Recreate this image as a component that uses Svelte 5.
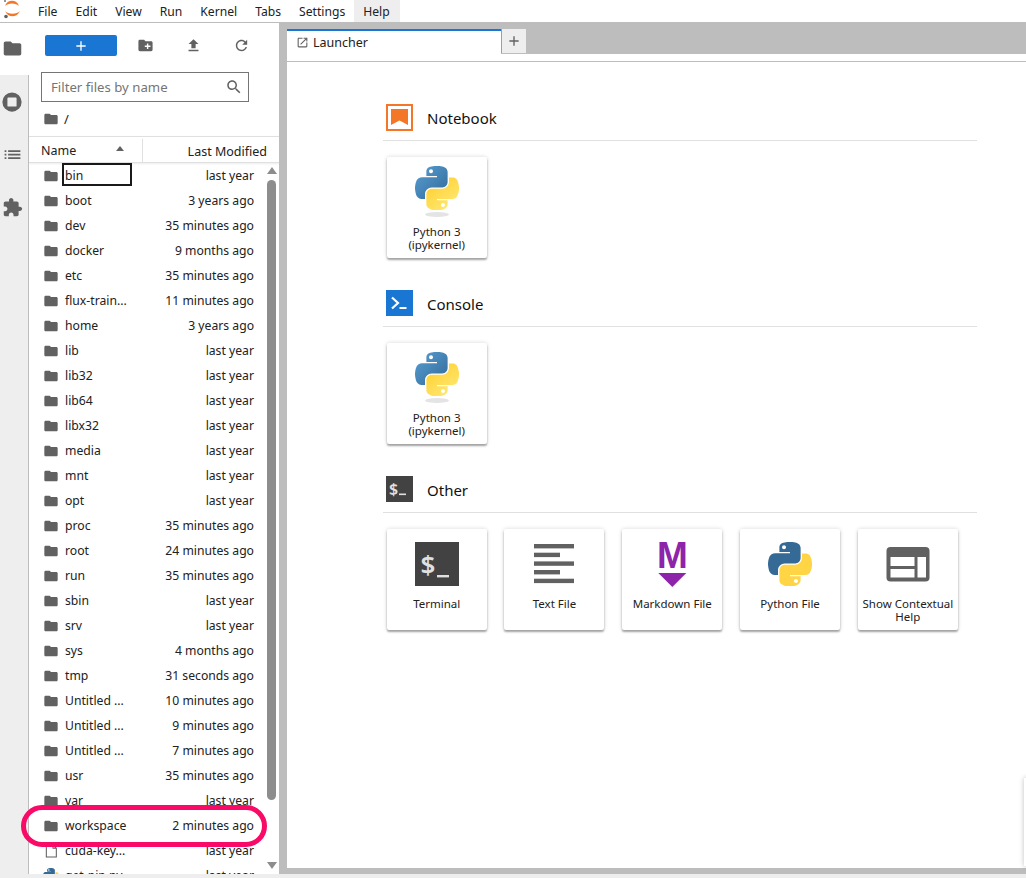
<script>
  const menus = ['File', 'Edit', 'View', 'Run', 'Kernel', 'Tabs', 'Settings', 'Help'];

  const files = [
    ['bin', 'last year'],
    ['boot', '3 years ago'],
    ['dev', '35 minutes ago'],
    ['docker', '9 months ago'],
    ['etc', '35 minutes ago'],
    ['flux-train...', '11 minutes ago'],
    ['home', '3 years ago'],
    ['lib', 'last year'],
    ['lib32', 'last year'],
    ['lib64', 'last year'],
    ['libx32', 'last year'],
    ['media', 'last year'],
    ['mnt', 'last year'],
    ['opt', 'last year'],
    ['proc', '35 minutes ago'],
    ['root', '24 minutes ago'],
    ['run', '35 minutes ago'],
    ['sbin', 'last year'],
    ['srv', 'last year'],
    ['sys', '4 months ago'],
    ['tmp', '31 seconds ago'],
    ['Untitled ...', '10 minutes ago'],
    ['Untitled ...', '9 minutes ago'],
    ['Untitled ...', '7 minutes ago'],
    ['usr', '35 minutes ago'],
    ['var', 'last year'],
    ['workspace', '2 minutes ago'],
    ['cuda-key...', 'last year', 'file'],
    ['get-pip.py', 'last year', 'py']
  ];

  const folderPath = 'M10 4H4c-1.1 0-1.99.9-1.99 2L2 18c0 1.1.9 2 2 2h16c1.1 0 2-.9 2-2V8c0-1.1-.9-2-2-2h-8l-2-2z';
  const pyBlue = 'M54.9 0C50.3 0 46 .4 42.1 1.1 30.8 3.1 28.7 7.3 28.7 15v10.2h26.8v3.4H18.6c-7.8 0-14.6 4.7-16.7 13.6-2.5 10.2-2.6 16.6 0 27.3C3.8 77.4 8.3 83 16.1 83h9.2V70.8c0-8.8 7.7-16.7 16.8-16.7h26.8c7.4 0 13.4-6.1 13.4-13.6V15c0-7.3-6.1-12.7-13.4-13.9C64.3.3 59.5 0 54.9 0zm-14.5 8.2c2.8 0 5 2.3 5 5.1s-2.3 5.1-5 5.1c-2.8 0-5-2.3-5-5.1s2.3-5.1 5-5.1z';
  const pyYellow = 'M85.6 28.7v11.9c0 9.2-7.8 17-16.8 17H42.1c-7.3 0-13.4 6.3-13.4 13.6v25.5c0 7.3 6.3 11.5 13.4 13.6 8.5 2.5 16.6 2.9 26.8 0 6.8-2 13.4-5.9 13.4-13.6V86.5H55.5v-3.4h40.2c7.8 0 10.7-5.4 13.4-13.6 2.8-8.4 2.7-16.5 0-27.2-1.9-7.8-5.6-13.6-13.4-13.6zM70.6 93.3c2.8 0 5 2.3 5 5.1s-2.3 5.1-5 5.1c-2.8 0-5-2.3-5-5.1s2.3-5.1 5-5.1z';
</script>

{#snippet python(cls, flat)}
  <svg class={cls} viewBox="0 0 111 111">
    <path d={pyBlue} fill={flat ? '#366a96' : 'url(#py-blue) #3f7cad'} />
    <path d={pyYellow} fill={flat ? '#ffd545' : 'url(#py-yellow) #ffdc55'} />
  </svg>
{/snippet}

{#snippet kernelCard()}
  <div class="card">
    <div class="card-icon kernel">
      {@render python('ic44', false)}
      <span class="py-shadow"></span>
    </div>
    <div class="card-label">Python 3<br />(ipykernel)</div>
  </div>
{/snippet}

<svg class="defs" aria-hidden="true">
  <defs>
    <linearGradient id="py-blue" x1="0" y1="0" x2="1" y2="1">
      <stop offset="0" stop-color="#5a9fd4" />
      <stop offset="1" stop-color="#306998" />
    </linearGradient>
    <linearGradient id="py-yellow" x1="0.8" y1="0.9" x2="0.3" y2="0.2">
      <stop offset="0" stop-color="#ffe873" />
      <stop offset="1" stop-color="#ffd43b" />
    </linearGradient>
  </defs>
</svg>

<div class="app">
  <header class="menubar">
    <svg class="logo" viewBox="0 0 24 22">
      <path d="M5 6C7 -1 17 -1 19 6C16 2.5 8 2.5 5 6z" fill="#f37726" />
      <path d="M5 11C8 18 17 18 20 11C17 14.5 8 14.5 5 11z" fill="#f37726" />
      <circle cx="6" cy="16.5" r="1.8" fill="#616161" />
      <circle cx="5" cy="1" r="1" fill="#767677" />
    </svg>
    <nav class="menus">
      {#each menus as m}
        <span class="menu" class:open={m === 'Help'}>{m}</span>
      {/each}
    </nav>
  </header>

  <div class="middle">
    <aside class="sidebar">
      <div class="side-tab active">
        <svg viewBox="0 0 24 24" class="side-icon"><path d={folderPath} /></svg>
      </div>
      <div class="side-rest">
        <div class="side-tab">
          <svg viewBox="0 0 24 24" class="side-icon big">
            <path fill-rule="evenodd" d="M12 1.5a10.5 10.5 0 1 0 0 21 10.5 10.5 0 0 0 0-21zM8 7h8a1 1 0 0 1 1 1v8a1 1 0 0 1-1 1H8a1 1 0 0 1-1-1V8a1 1 0 0 1 1-1z" />
          </svg>
        </div>
        <div class="side-tab">
          <svg viewBox="0 0 24 24" class="side-icon">
            <path d="M3 13h2v-2H3v2zm0 4h2v-2H3v2zm0-8h2V7H3v2zm4 4h14v-2H7v2zm0 4h14v-2H7v2zM7 7v2h14V7H7z" />
          </svg>
        </div>
        <div class="side-tab">
          <svg viewBox="0 0 24 24" class="side-icon">
            <path d="M20.5 11H19V7c0-1.1-.9-2-2-2h-4V3.5C13 2.12 11.88 1 10.5 1S8 2.12 8 3.5V5H4c-1.1 0-1.99.9-1.99 2v3.8H3.5c1.49 0 2.7 1.21 2.7 2.7s-1.21 2.7-2.7 2.7H2V20c0 1.1.9 2 2 2h3.8v-1.5c0-1.49 1.21-2.7 2.7-2.7 1.49 0 2.7 1.21 2.7 2.7V22H17c1.1 0 2-.9 2-2v-4h1.5c1.38 0 2.5-1.12 2.5-2.5S21.88 11 20.5 11z" />
          </svg>
        </div>
      </div>
    </aside>

    <section class="browser">
      <div class="toolbar">
        <button class="new-btn" aria-label="New launcher">
          <svg viewBox="0 0 24 24"><path d="M19 13h-6v6h-2v-6H5v-2h6V5h2v6h6v2z" fill="#fff" /></svg>
        </button>
        <span class="tool">
          <svg viewBox="0 0 24 24"><path d="M20 6h-8l-2-2H4c-1.11 0-1.99.89-1.99 2L2 18c0 1.11.89 2 2 2h16c1.11 0 2-.89 2-2V8c0-1.11-.89-2-2-2zm-1 8h-3v3h-2v-3h-3v-2h3V9h2v3h3v2z" /></svg>
        </span>
        <span class="tool">
          <svg viewBox="0 0 24 24"><path d="M9 16h6v-6h4l-7-7-7 7h4zm-4 2h14v2H5z" /></svg>
        </span>
        <span class="tool">
          <svg viewBox="0 0 24 24"><path d="M17.65 6.35C16.2 4.9 14.21 4 12 4c-4.42 0-7.99 3.58-7.99 8s3.57 8 7.99 8c3.73 0 6.84-2.55 7.73-6h-2.08c-.82 2.33-3.04 4-5.65 4-3.31 0-6-2.69-6-6s2.69-6 6-6c1.66 0 3.14.69 4.22 1.78L13 11h7V4l-2.35 2.35z" /></svg>
        </span>
      </div>

      <div class="filter">
        <span class="placeholder">Filter files by name</span>
        <svg viewBox="0 0 24 24"><path d="M15.5 14h-.79l-.28-.27C15.41 12.59 16 11.11 16 9.5 16 5.91 13.09 3 9.5 3S3 5.91 3 9.5 5.91 16 9.5 16c1.61 0 3.09-.59 4.23-1.57l.27.28v.79l5 4.99L20.49 19l-4.99-5zm-6 0C7.01 14 5 11.99 5 9.5S7.01 5 9.5 5 14 7.01 14 9.5 11.99 14 9.5 14z" /></svg>
      </div>

      <div class="crumbs">
        <svg viewBox="0 0 24 24"><path d={folderPath} /></svg>
        <span>/</span>
      </div>

      <div class="list-head">
        <div class="col-name">
          <span>Name</span>
          <i class="caret"></i>
        </div>
        <div class="col-date">Last Modified</div>
      </div>

      <div class="list-wrap">
        <div class="rows">
          {#each files as [name, date, kind], i}
            <div class="row">
              {#if kind === 'file'}
                <svg class="row-icon" viewBox="0 0 24 24">
                  <path d="M5 3h10l5 5v13H5z M15 3v5h5" fill="none" stroke="#616161" stroke-width="1.6" />
                </svg>
              {:else if kind === 'py'}
                {@render python('row-icon', true)}
              {:else}
                <svg class="row-icon" viewBox="0 0 24 24"><path d={folderPath} fill="#616161" /></svg>
              {/if}
              {#if i === 0}
                <span class="name editing">{name}</span>
              {:else}
                <span class="name">{name}</span>
              {/if}
              <span class="date">{date}</span>
            </div>
          {/each}
        </div>
        <div class="scrollbar">
          <i class="arrow up"></i>
          <div class="thumb"></div>
          <i class="arrow down"></i>
        </div>
      </div>
    </section>

    <main class="dock">
      <div class="tabbar">
        <div class="tab">
          <svg viewBox="0 0 24 24"><path d="M19 19H5V5h7V3H5c-1.11 0-2 .9-2 2v14c0 1.1.89 2 2 2h14c1.1 0 2-.9 2-2v-7h-2v7zM14 3v2h3.59l-9.83 9.83 1.41 1.41L19 6.41V10h2V3h-7z" fill="#616161" /></svg>
          <span>Launcher</span>
        </div>
        <div class="add-tab">
          <svg viewBox="0 0 24 24"><path d="M19 13h-6v6h-2v-6H5v-2h6V5h2v6h6v2z" fill="#616161" /></svg>
        </div>
      </div>
      <div class="panel">
        <div class="strip"></div>
        <div class="launcher">
          <div class="section">
            <div class="section-head">
              <div class="nb-icon"><svg viewBox="0 0 17 16"><path d="M0 0h17v16l-8.5-4.5L0 16z" fill="#f37726" /></svg></div>
              <h2>Notebook</h2>
            </div>
            <div class="cards">{@render kernelCard()}</div>
          </div>

          <div class="section">
            <div class="section-head">
              <div class="console-icon">
                <svg viewBox="0 0 26 26">
                  <path d="M6 7.5l6 5.5-6 5.5" fill="none" stroke="#fff" stroke-width="2.2" />
                  <rect x="13.5" y="17" width="7" height="2" fill="#fff" />
                </svg>
              </div>
              <h2>Console</h2>
            </div>
            <div class="cards">{@render kernelCard()}</div>
          </div>

          <div class="section">
            <div class="section-head">
              <div class="term-small">
                <svg viewBox="0 0 26 26">
                  <text x="3" y="19" class="dollar small">$</text>
                  <rect x="13" y="17.5" width="7" height="1.6" fill="#e0e0e0" />
                </svg>
              </div>
              <h2>Other</h2>
            </div>
            <div class="cards">
              <div class="card">
                <div class="card-icon">
                  <svg class="ic44" viewBox="0 0 44 44">
                    <rect width="44" height="44" fill="#424242" />
                    <text x="5.5" y="32" class="dollar">$</text>
                    <rect x="22" y="33" width="12" height="2.4" fill="#e0e0e0" />
                  </svg>
                </div>
                <div class="card-label">Terminal</div>
              </div>
              <div class="card">
                <div class="card-icon">
                  <svg class="ic44" viewBox="0 0 44 44">
                    <rect x="2" y="2" width="40" height="4.4" fill="#616161" />
                    <rect x="2" y="10.7" width="26" height="4.4" fill="#616161" />
                    <rect x="2" y="19.4" width="40" height="4.4" fill="#616161" />
                    <rect x="2" y="28" width="26" height="4.4" fill="#616161" />
                    <rect x="2" y="36.7" width="40" height="4.4" fill="#616161" />
                  </svg>
                </div>
                <div class="card-label">Text File</div>
              </div>
              <div class="card">
                <div class="card-icon">
                  <svg class="ic44 free" viewBox="0 0 44 44">
                    <text x="22.3" y="25.5" class="md-m">M</text>
                    <path d="M8.3 31h28L22.3 45z" fill="#8e24aa" />
                  </svg>
                </div>
                <div class="card-label">Markdown File</div>
              </div>
              <div class="card">
                <div class="card-icon">{@render python('ic44', true)}</div>
                <div class="card-label">Python File</div>
              </div>
              <div class="card">
                <div class="card-icon">
                  <svg class="ic44" viewBox="0 0 44 44">
                    <rect x="0.5" y="5" width="43" height="34.5" rx="4" fill="#616161" />
                    <rect x="4.5" y="15" width="24" height="9" fill="#fff" />
                    <rect x="4.5" y="27" width="24" height="8.5" fill="#fff" />
                    <rect x="31.5" y="15" width="8.5" height="20.5" fill="#fff" />
                  </svg>
                </div>
                <div class="card-label">Show Contextual Help</div>
              </div>
            </div>
          </div>
        </div>
      </div>
    </main>
  </div>

  <footer class="status"></footer>

  <div class="ring"></div>
  <div class="edge-box"></div>
</div>

<style>
  :global(body) {
    margin: 0;
    background: #fff;
  }

  .defs {
    position: absolute;
    width: 0;
    height: 0;
  }

  .app {
    position: relative;
    display: flex;
    flex-direction: column;
    height: 878px;
    overflow: hidden;
    font-family: "Noto Sans", "Open Sans", sans-serif;
    color: #212121;
  }

  .menubar {
    display: flex;
    align-items: stretch;
    flex: none;
    height: 22px;
    background: #fff;
    border-bottom: 1px solid #bdbdbd;
  }

  .logo {
    width: 24px;
    height: 22px;
    flex: none;
  }

  .menus {
    display: flex;
    margin-left: 5px;
  }

  .menu {
    display: flex;
    align-items: center;
    padding: 0 9px;
    font-size: 12.15px;
    color: #212121;
  }

  .menu.open {
    background: #eee;
    padding-right: 10px;
  }

  .middle {
    display: flex;
    flex: 1;
    min-height: 0;
    background: #bdbdbd;
  }

  .sidebar {
    display: flex;
    flex-direction: column;
    width: 29px;
    flex: none;
    background: #fff;
  }

  .side-tab {
    display: flex;
    align-items: center;
    justify-content: center;
    height: 53px;
    width: 24px;
  }

  .sidebar > .side-tab.active {
    height: 52px;
    padding-bottom: 1px;
    box-sizing: border-box;
  }

  .side-rest {
    flex: 1;
    background: #eee;
    border-right: 1px solid #bdbdbd;
  }

  .side-icon {
    width: 21px;
    height: 21px;
    fill: #616161;
  }

  .side-icon.big {
    width: 22px;
    height: 22px;
  }

  .browser {
    display: flex;
    flex-direction: column;
    width: 250px;
    flex: none;
    background: #fff;
    overflow: hidden;
  }

  .toolbar {
    display: flex;
    align-items: center;
    height: 21px;
    padding: 12px 0 0 16px;
    flex: none;
  }

  .new-btn {
    display: flex;
    align-items: center;
    justify-content: center;
    width: 72px;
    height: 21px;
    padding: 0;
    border: 0;
    border-radius: 2px;
    background: #1976d2;
  }

  .new-btn svg {
    width: 16px;
    height: 16px;
  }

  .tool {
    display: flex;
    justify-content: center;
    width: 48px;
    fill: #616161;
  }

  .tool:first-of-type {
    margin-left: 4px;
  }

  .tool svg {
    width: 17px;
    height: 17px;
  }

  .filter {
    display: flex;
    align-items: center;
    justify-content: space-between;
    box-sizing: border-box;
    width: 208px;
    height: 30px;
    margin: 16px 0 0 12px;
    padding: 0 5px 0 9px;
    border: 1px solid #757575;
    flex: none;
  }

  .placeholder {
    font-size: 13.2px;
    color: #757575;
  }

  .filter svg {
    width: 18px;
    height: 18px;
    fill: #616161;
  }

  .crumbs {
    display: flex;
    align-items: center;
    gap: 5px;
    height: 34px;
    padding-left: 14px;
    font-size: 13px;
    fill: #616161;
    flex: none;
  }

  .crumbs svg {
    width: 16px;
    height: 16px;
  }

  .list-head {
    display: flex;
    height: 25px;
    border-top: 1px solid #e0e0e0;
    border-bottom: 1px solid #e0e0e0;
    box-shadow: 0 1px 2px rgba(0, 0, 0, 0.08);
    font-size: 12.5px;
    flex: none;
    position: relative;
    z-index: 1;
  }

  .col-name {
    display: flex;
    align-items: center;
    justify-content: space-between;
    box-sizing: border-box;
    width: 114px;
    padding: 0 18px 0 12px;
    border-right: 1px solid #e0e0e0;
    margin-top: 2px;
    color: #212121;
  }

  .caret {
    width: 0;
    height: 0;
    margin-top: -5px;
    border: 4px solid transparent;
    border-top: 0;
    border-bottom: 5px solid #616161;
  }

  .col-date {
    flex: 1;
    padding: 5px 12px 0 0;
    text-align: right;
    line-height: 20px;
  }

  .list-wrap {
    display: flex;
    flex: 1;
    min-height: 0;
  }

  .rows {
    flex: 1;
    min-width: 0;
    overflow: hidden;
  }

  .row {
    display: flex;
    align-items: center;
    height: 25px;
    padding: 0 0 0 14px;
    font-size: 12.2px;
  }

  .row-icon {
    width: 16px;
    height: 16px;
    flex: none;
  }

  .name {
    flex: 1;
    margin-left: 6px;
    white-space: nowrap;
  }

  .name.editing {
    box-sizing: border-box;
    flex: none;
    width: 70px;
    height: 23px;
    margin: -2px 0 0 3px;
    padding-left: 1px;
    line-height: 22px;
    border: 2px solid #1a1a1a;
  }

  .name.editing + .date {
    margin-left: auto;
  }

  .date {
    padding-right: 10px;
    text-align: right;
    white-space: nowrap;
  }

  .scrollbar {
    display: flex;
    flex-direction: column;
    align-items: center;
    width: 15px;
    flex: none;
    padding-top: 4px;
    box-sizing: border-box;
  }

  .thumb {
    flex: none;
    width: 9px;
    height: 620px;
    margin: 6px 0 62px;
    border-radius: 5px;
    background: #8d8d8d;
  }

  .arrow {
    flex: none;
    width: 0;
    height: 0;
    border: 5px solid transparent;
  }

  .arrow.up {
    border-top: 0;
    border-bottom: 7px solid #8d8d8d;
  }

  .arrow.down {
    border-bottom: 0;
    border-top: 7px solid #8d8d8d;
  }

  .dock {
    display: flex;
    flex-direction: column;
    flex: 1;
    min-width: 0;
    padding: 6px 0 6px 8px;
  }

  .tabbar {
    display: flex;
    height: 25px;
    flex: none;
  }

  .tab {
    display: flex;
    align-items: center;
    gap: 4px;
    box-sizing: border-box;
    width: 214px;
    padding: 0 0 0 9px;
    border-top: 2px solid #1976d2;
    background: #fff;
    font-size: 12.5px;
  }

  .tab svg {
    width: 13px;
    height: 13px;
  }

  .add-tab {
    display: flex;
    align-items: center;
    justify-content: center;
    box-sizing: border-box;
    width: 25px;
    height: 24px;
    border-left: 1px solid #9e9e9e;
    background: #eee;
  }

  .add-tab svg {
    width: 16px;
    height: 16px;
  }

  .panel {
    flex: 1;
    min-height: 0;
    background: #fff;
    overflow: hidden;
  }

  .strip {
    height: 7px;
    border-bottom: 1px solid #bdbdbd;
  }

  .launcher {
    display: flex;
    flex-direction: column;
    gap: 32px;
    width: 594px;
    padding: 42px 0 0 96px;
  }

  .section-head {
    display: flex;
    align-items: center;
    gap: 14px;
    height: 37px;
    padding-left: 3px;
    border-bottom: 1px solid #e0e0e0;
    box-sizing: border-box;
  }

  .section-head > div {
    margin-top: -10px;
    flex: none;
  }

  h2 {
    margin: -9px 0 0;
    font-size: 15px;
    font-weight: 400;
    color: #111;
  }

  .nb-icon {
    display: flex;
    align-items: center;
    justify-content: center;
    box-sizing: border-box;
    width: 27px;
    height: 27px;
    border: 2px solid #f37726;
  }

  .nb-icon svg {
    width: 17px;
    height: 16px;
  }

  .console-icon {
    width: 27px;
    height: 26px;
    background: #1976d2;
  }

  .term-small {
    width: 27px;
    height: 26px;
    background: #424242;
  }

  .console-icon svg,
  .term-small svg {
    display: block;
    width: 26px;
    height: 26px;
  }

  .cards {
    display: flex;
    gap: 17.8px;
    margin: 16px 0 0 3.7px;
  }

  .card {
    box-sizing: border-box;
    width: 100px;
    height: 101px;
    padding-top: 9px;
    background: #fff;
    border-radius: 2px;
    box-shadow: 0 2px 2px rgba(0, 0, 0, 0.32), 0 0 4px rgba(0, 0, 0, 0.16);
    text-align: center;
  }

  .card-icon {
    position: relative;
    display: flex;
    justify-content: center;
    height: 55px;
    padding-top: 4px;
  }

  .card-icon.kernel {
    padding-top: 0;
    height: 59px;
  }

  .ic44 {
    width: 44px;
    height: 44px;
  }

  .ic44.free {
    overflow: visible;
  }

  .py-shadow {
    position: absolute;
    left: 50%;
    top: 46px;
    width: 24px;
    height: 5px;
    margin-left: -12px;
    border-radius: 50%;
    background: #e4e4e4;
  }

  .card-label {
    padding: 0 3px;
    font-size: 11.5px;
    line-height: 13px;
    color: #212121;
  }

  .dollar {
    font-family: "Noto Sans", sans-serif;
    font-size: 26px;
    font-weight: 600;
    fill: #e0e0e0;
  }

  .dollar.small {
    font-size: 16px;
  }

  .md-m {
    font-family: "Liberation Sans", sans-serif;
    font-size: 37px;
    font-weight: 700;
    text-anchor: middle;
    fill: #8e24aa;
  }

  .status {
    height: 4px;
    flex: none;
    background: #eee;
  }

  .ring {
    position: absolute;
    left: 21px;
    top: 805px;
    width: 246px;
    height: 42px;
    box-sizing: border-box;
    border: 5px solid #f80a66;
    border-radius: 21px;
    pointer-events: none;
  }

  .edge-box {
    position: absolute;
    left: 1024px;
    top: 778px;
    width: 20px;
    height: 88px;
    background: #fff;
    box-shadow: 0 0 5px rgba(0, 0, 0, 0.25);
  }
</style>
